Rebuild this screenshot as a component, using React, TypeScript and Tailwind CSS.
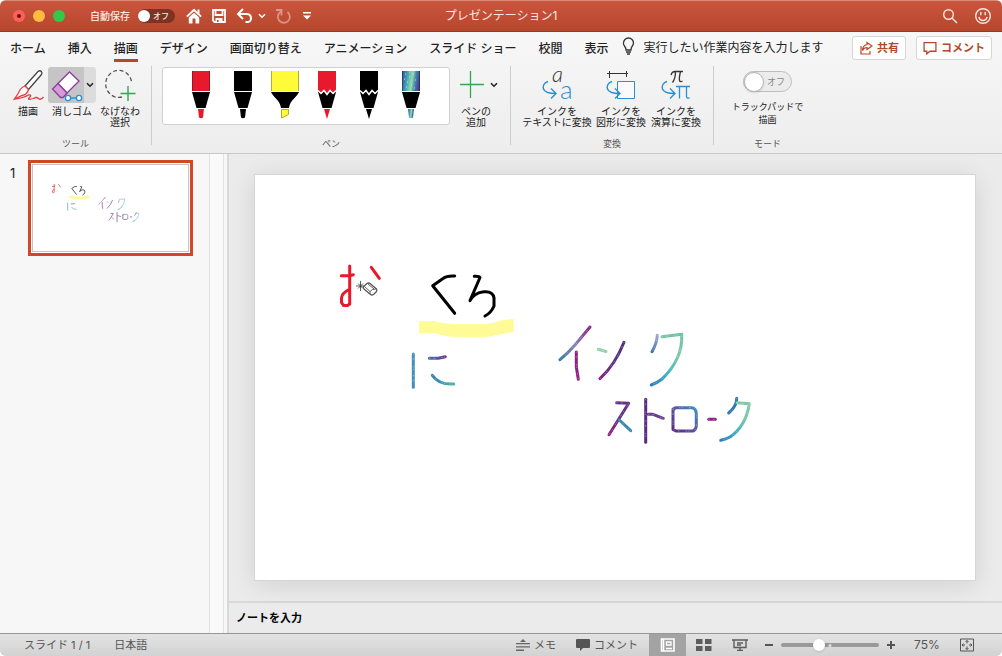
import { useState } from 'react';
import type { ReactNode } from 'react';

const tabs = ['ホーム', '挿入', '描画', 'デザイン', '画面切り替え', 'アニメーション', 'スライド ショー', '校閲', '表示'];

const galaxyStops = ['#3f4a8c', '#3b7fb5', '#4fb8b0', '#9fd6a8', '#3b86b4', '#4a4590'];

const pens = [
  { id: 'red-pen', label: '赤のペン', kind: 'pen', color: '#e8192c' },
  { id: 'black-pen', label: '黒のペン', kind: 'pen', color: '#000000' },
  { id: 'highlighter', label: '黄色の蛍光ペン', kind: 'marker', color: '#fffb38' },
  { id: 'red-pencil', label: '赤の鉛筆', kind: 'pencil', color: '#e8192c' },
  { id: 'black-pencil', label: '黒の鉛筆', kind: 'pencil', color: '#000000' },
  { id: 'galaxy-pen', label: '銀河のペン', kind: 'pen', color: 'url(#penGalaxy)' },
];

const Pen = ({ kind, color }: { kind: string; color: string }) => (
  <svg viewBox="0 0 28 48" className="h-12 w-7">
    <defs>
      <linearGradient id="penGalaxy" x1="0" y1="0" x2="1" y2="0.15">
        {galaxyStops.map((stop, i) => (
          <stop key={i} offset={i / 5} stopColor={stop} />
        ))}
      </linearGradient>
    </defs>
    {kind === 'marker' && (
      <>
        <path d="M0 0h28v20H0z" fill={color} />
        <path d="M.5 0v20M27.5 0v20" stroke="#b5b02c" />
        <path d="M0 21h28c-2 5-9 8-10 16h-8C9 29 2 26 0 21z" />
        <path d="M10.500 38.500h7v5l-7 3.500z" fill={color} stroke="#b5a92c" />
      </>
    )}
    {kind === 'pen' && (
      <>
        <path d="M5 0h18v20H5z" fill={color} />
        <path d="M5.500 0v20M22.500 0v20" stroke="#000" opacity=".3" />
        <path d="M5 21h18l-4.500 16h-9z" />
        <path d="M11 38h6l-1 8.500q-2 1.500-4 0z" fill={color} />
        {color.startsWith('url') && (
          <path d="M8 3h1M12 6h1M10 11h1M16 3h1M18 9h1M14 14h1M9 16h1M17 17h1M12 1h1M7 8h1" stroke="#d9f2ef" opacity=".8" />
        )}
      </>
    )}
    {kind === 'pencil' && (
      <>
        <path d="M5 21h18l-4.500 16h-9z" />
        <path d="M5 0h18v20l-2.500 2.500-3-3-3.500 4-3.500-4-3 3L5 20z" fill={color} />
        <path d="M5 19.500 8 22.500l3-3 3 4 3-4 3 3 3-3" fill="none" stroke="#fff" strokeWidth="1.500" />
        <path d="M11 38h6l-3 10z" fill={color} />
      </>
    )}
  </svg>
);

const InkStrokes = ({ prefix }: { prefix: string }) => {
  const paint = (name: string) => `url(#${prefix}-${name})`;
  const galaxy = [
    { d: 'M335 152L320 170Q313 178 305 184.700', stroke: paint('a') },
    { d: 'M321.300 177V191.700L323.300 204.300', stroke: '#8a2183' },
    { d: 'M343.300 174.300L351 176.500', stroke: '#93d0ae' },
    { d: 'M369 167.300Q360 190 345 203.700', stroke: paint('b') },
    { d: 'M402.300 160.300Q402 168 397 176.700', stroke: paint('c') },
    { d: 'M407 161.700L426.700 159.300Q428 184 406.700 204.300Q402 208 396.300 210', stroke: paint('d') },
    { d: 'M361.700 227.700L373.700 228.300L364.300 243.300L354 259.700', stroke: paint('e') },
    { d: 'M364.300 245L375.700 255.700', stroke: '#3a86ae' },
    { d: 'M390.700 224.300V267.300', stroke: '#5b2a80' },
    { d: 'M393.300 239.300H398L408.300 243.300', stroke: '#6c3b8c' },
    { d: 'M418 234V254.500L421 256H438Q441 255 441.300 251V239Q441 233 437 232.700H421Q418 233 418 237', stroke: paint('f') },
    { d: 'M453.700 244.300H460.300', stroke: '#8a2183' },
    { d: 'M481.700 223.300Q482 231 473.700 238', stroke: '#3478b0' },
    { d: 'M482.300 227.700L494.300 228.700Q491 251 475 262Q471 264 465.700 265.300', stroke: paint('g') },
    { d: 'M158.300 179V212.300', stroke: '#448fb8' },
    { d: 'M174.300 183.300H183.300L190.300 181.700', stroke: paint('h') },
    { d: 'M177.300 200.300Q184 210 198.700 209', stroke: paint('i') },
  ];
  const gradients = [
    { id: 'a', at: [335, 152, 305, 185], colors: ['#8a2080', '#8683bb', '#3479ad'] },
    { id: 'b', at: [369, 167, 345, 204], colors: ['#4b3078', '#5b3585', '#8a2080'] },
    { id: 'c', at: [402, 160, 397, 177], colors: ['#9ba6cf', '#7790c0', '#3e72a8'] },
    { id: 'd', at: [422, 159, 397, 210], colors: ['#6fc2a2', '#82c7a3', '#43b6c6', '#2f7fb6'] },
    { id: 'e', at: [374, 228, 354, 260], colors: ['#6a2f86', '#5f3386', '#94208a'] },
    { id: 'f', at: [418, 256, 442, 233], colors: ['#5b2a80', '#5a55a0', '#3b8fc0'] },
    { id: 'g', at: [492, 228, 466, 265], colors: ['#7fcaa6', '#79c4a5', '#3fb2c4', '#2f7fb6'] },
    { id: 'h', at: [174, 183, 190, 181], colors: ['#3a72b4', '#5a55a0', '#6b3590'] },
    { id: 'i', at: [177, 200, 199, 209], colors: ['#3a7fb0', '#3a98b4', '#4fb59f'] },
  ];

  return (
    <svg viewBox="0 0 720 405" className="h-full w-full" role="img" aria-label="インク ストローク">
      <defs>
        {gradients.map(({ id, at, colors }) => (
          <linearGradient key={id} id={`${prefix}-${id}`} gradientUnits="userSpaceOnUse" x1={at[0]} y1={at[1]} x2={at[2]} y2={at[3]}>
            {colors.map((color, i) => (
              <stop key={i} offset={i / (colors.length - 1)} stopColor={color} />
            ))}
          </linearGradient>
        ))}
      </defs>
      <path d="M164 146h14q12 3 22 3h30q9-1 18-4l10.700-1v13l-17.700 3q-6 2-12 2h-30q-10-1-21-4h-14z" fill="#fffb97" />
      <g fill="none" strokeWidth="3" strokeLinecap="round" strokeLinejoin="round">
        <g stroke="#e8192c">
          <path d="M94.700 91V129L92.500 130.500H88.500L86.500 127.500V123Q87 118 94 114.500" />
          <path d="M86.300 100.700H94L98.300 99.700M116.300 92.300L124.300 103.300" />
        </g>
        <g stroke="#000">
          <path d="M199.700 101Q192 100.500 188 103.500L177.700 110.700L199.700 138.300" />
          <path d="M219.300 101.300Q224 101 225 102.500L215 125.700Q219 117.500 229 116.700Q238 116 239 123V131Q236 138 230 141" />
        </g>
        {galaxy.map((ink) => (
          <path key={ink.d} d={ink.d} stroke={ink.stroke} />
        ))}
        <g stroke="#fff" strokeWidth="1" strokeDasharray="0.500 4 1 7 0.500 2 0.500 6" opacity=".35">
          {galaxy.map((ink) => (
            <path key={ink.d} d={ink.d} />
          ))}
        </g>
      </g>
    </svg>
  );
};

const Chevron = () => (
  <svg viewBox="0 0 8 6" className="h-[6px] w-2" fill="none" stroke="currentColor" strokeWidth="1.600">
    <path d="M1 1.200l3 3 3-3" />
  </svg>
);

const ConvertArrow = () => (
  <path d="M8 12.500C4 13.500 2.500 17 3.500 20Q5 24.500 16 24.500M11 19.500l5 5-5 5" fill="none" stroke="#2b8fd0" strokeWidth="1.400" />
);

const convertTools = [
  {
    lines: ['インクを', 'テキストに変換'],
    width: 'w-[72px]',
    icon: (
      <>
        <text x="12" y="13" className="fill-[#333] font-['Lato'] text-[22px] font-light italic">a</text>
        <text x="20" y="30" className="fill-[#2b8fd0] font-['Lato'] text-[26px] font-light">a</text>
        <ConvertArrow />
      </>
    ),
  },
  {
    lines: ['インクを', '図形に変換'],
    width: 'w-14',
    icon: (
      <>
        <path d="M3 4.500h21M5.500 2v7M22.500 2v6" stroke="#333" fill="none" />
        <path d="M13.500 12.500h17v17h-17z" fill="#fafafa" stroke="#2b8fd0" />
        <ConvertArrow />
      </>
    ),
  },
  {
    lines: ['インクを', '演算に変換'],
    width: 'w-[54px]',
    icon: (
      <>
        <path d="M12 6q1-3.500 4-3.500h8M16.500 2.500q0 7-3 11M21.500 2.500q-1.500 6-1 9 .5 2 3 .5" fill="none" stroke="#333" strokeWidth="1.300" />
        <path d="M17 17.500h14M20.500 17.500v12M27.500 17.500v10q0 2 3 1.500" fill="none" stroke="#2b8fd0" strokeWidth="1.300" />
        <ConvertArrow />
      </>
    ),
  },
];

const Group = ({ label, className, children }: { label: string; className: string; children: ReactNode }) => (
  <section aria-label={label} className={`flex h-[89px] flex-col justify-between pb-1 ${className}`}>
    <div className="flex">{children}</div>
    <p className="text-center text-[9px] leading-[11px] text-[#555]">{label}</p>
  </section>
);

const Divider = () => <div className="mt-[2px] h-[79px] w-px shrink-0 bg-[#cdcdcd]" />;

const TitleBar = () => {
  const [autoSave, setAutoSave] = useState(false);

  return (
    <header className="grid h-8 grid-cols-[1fr_auto_1fr] items-center border-t border-b border-t-[#d98a78] border-b-[#983820] bg-linear-to-b from-[#ca553d] to-[#b6472d] text-white">
      <div className="flex items-center pl-[13px]">
        <div className="flex gap-2">
          <button aria-label="閉じる" className="flex size-3 items-center justify-center rounded-full bg-[#fc605b]">
            <span className="size-1 rounded-full bg-[#6b0d08]" />
          </button>
          <button aria-label="しまう" className="size-3 rounded-full bg-[#fdbc40]" />
          <button aria-label="拡大" className="size-3 rounded-full bg-[#34c84a]" />
        </div>
        <label className="ml-[25px] flex items-center gap-2 text-[10px] font-medium text-[#fbe6e0]">
          自動保存
          <input type="checkbox" checked={autoSave} onChange={(e) => setAutoSave(e.target.checked)} className="sr-only" />
          <span className="flex h-[14px] w-[37px] items-center rounded-full bg-[#7c3322] text-[8px] leading-none">
            <span className="mr-[3px] size-3 rounded-full bg-white" />
            オフ
          </span>
        </label>
        <div className="ml-[11px] flex items-center gap-[9px]">
          <button aria-label="ホーム">
            <svg viewBox="0 0 16 16" className="size-4" fill="#fff">
              <path d="M8 .5L.2 8l1.300 1.300L8 3.200l6.500 6.100L15.800 8l-2.300-2.200V1.500h-2v2.400z" />
              <path d="M8 4.800L2.800 9.600V15.500h3.700v-5h3v5h3.700V9.600z" />
            </svg>
          </button>
          <button aria-label="保存">
            <svg viewBox="0 0 16 16" className="size-4" fill="none" stroke="#fff" strokeWidth="1.800">
              <path d="M2 2h12v12H3.500L2 12.500zM4.500 2v5h7V2" />
              <path d="M4.500 10h7v4.500h-7z" fill="#fff" stroke="none" />
              <path d="M6 12h1.500v2H6z" fill="#b94b32" stroke="none" />
            </svg>
          </button>
          <div className="flex items-center gap-1">
            <button aria-label="元に戻す">
              <svg viewBox="0 0 18 16" className="h-4 w-[18px]" fill="none" stroke="#fff" strokeWidth="2">
                <path d="M7 1L2 6l5 5M2.500 6H11q4 .3 4 4.200T11 14H9.500" />
              </svg>
            </button>
            <button aria-label="元に戻す履歴"><Chevron /></button>
          </div>
          <button aria-label="やり直し">
            <svg viewBox="0 0 16 16" className="size-4 opacity-40" fill="none" stroke="#fff" strokeWidth="1.800">
              <path d="M6 3.500A6 6 0 1 0 12.500 4M1 2h5.500v5.500" />
            </svg>
          </button>
          <button aria-label="カスタマイズ" className="ml-[3px]">
            <svg viewBox="0 0 8 8" className="size-2" fill="#fff"><path d="M0 0h8v1.500H0zM0 3.500h8l-4 4z" /></svg>
          </button>
        </div>
      </div>
      <h1 className="text-[12px] text-[#fbe6e0]">プレゼンテーション1</h1>
      <div className="flex items-center justify-end gap-4 pr-[10px]">
        <button aria-label="検索">
          <svg viewBox="0 0 16 16" className="size-4" fill="none" stroke="#fbe6e0" strokeWidth="1.400">
            <circle cx="6.500" cy="6.500" r="4.800" /><path d="M10 10l5 5" />
          </svg>
        </button>
        <button aria-label="フィードバック">
          <svg viewBox="0 0 18 18" className="size-[18px]" fill="none" stroke="#fbe6e0" strokeWidth="1.400">
            <circle cx="9" cy="9" r="7.300" /><path d="M6.800 5v3.200M11.200 5v3.200M4.800 10q1 3.500 4.200 3.500t4.200-3.500" />
          </svg>
        </button>
      </div>
    </header>
  );
};

const TabBar = () => {
  const [active, setActive] = useState('描画');

  return (
    <div className="flex h-8 items-center text-[12px] text-[#222]">
      <nav className="flex gap-[22px] pl-[10px]">
        {tabs.map((tab) => (
          <button key={tab} onClick={() => setActive(tab)} className={`mt-1 border-b-[3px] font-medium whitespace-nowrap leading-5 ${active === tab ? 'border-[#b7472a]' : 'border-transparent'}`}>
            {tab}
          </button>
        ))}
      </nav>
      <label className="ml-[14px] flex flex-1 items-center gap-2">
        <svg viewBox="0 0 13 18" className="mb-1 h-[18px] w-[13px]" fill="none" stroke="#333" strokeWidth="1.300">
          <path d="M4 13q0-2-1.500-4T1.500 6a5 5 0 0 1 10 0q0 1.500-1.200 3T9 13zM4 15h5M5 17h3" />
        </svg>
        <input type="text" aria-label="操作アシスト" placeholder="実行したい作業内容を入力します" className="min-w-0 flex-1 bg-transparent outline-none placeholder:text-[#222]" />
      </label>
      <div className="flex gap-[10px] pr-[10px] text-[11px] font-bold text-[#b7472a]">
        <button className="flex h-6 items-center gap-1 rounded-[3px] border border-[#d6d6d6] bg-white px-[6px]">
          <svg viewBox="0 0 14 14" className="size-[14px]" fill="none" stroke="currentColor" strokeWidth="1.200">
            <path d="M2 5v8h9v-3" /><path d="M8 1.500L13 5 8 8.500v-2q-3 0-4.500 3 0-5 4.500-6z" />
          </svg>
          共有
        </button>
        <button className="flex h-6 items-center gap-1 rounded-[3px] border border-[#d6d6d6] bg-white px-[6px]">
          <svg viewBox="0 0 13 13" className="size-[14px]" fill="none" stroke="currentColor" strokeWidth="1.200">
            <path d="M1 1.500h11v8H6.500L3.500 12V9.500H1z" />
          </svg>
          コメント
        </button>
      </div>
    </div>
  );
};

const Ribbon = () => {
  const [trackpad, setTrackpad] = useState(false);

  return (
    <div className="flex border-b border-[#c8c8c8] text-[10px] leading-[11px] text-[#222]">
      <Group label="ツール" className="w-[151px]">
        <div className="flex pt-[3px] pl-2">
          <button className="flex w-10 flex-col items-center">
            <svg viewBox="0 0 32 36" className="mb-[3px] h-9 w-8" fill="none" strokeWidth="1.300">
              <path d="M13 19L26 4.500q2-1.500 3.300 0t0 3.300L16.500 22.500z" stroke="#444" fill="#fff" />
              <path d="M13 19q-5 2-6.500 7L2.500 32 10 28.500q5-.5 6.500-6z" stroke="#ee3a43" fill="#fff" />
              <path d="M2.500 32q9-1 14-4 4-.5 1 2.500t4 1q3-2 5 0t5-1.500" stroke="#ee3a43" />
            </svg>
            描画
          </button>
          <div className="flex w-12 flex-col items-center">
            <div className="mb-[3px] flex h-9 w-12 overflow-hidden rounded-[3px]">
              <button aria-label="消しゴム" aria-pressed="true" className="flex-1 bg-[#c5c5c5]">
                <svg viewBox="0 0 36 36" className="h-9 w-9" fill="none" strokeWidth="1.300">
                  <path d="M10 16.500L21.500 5 31 14 19 26z" fill="#fff" stroke="#8c3d9c" />
                  <path d="M10 16.500L4.500 22l8 8.500H15l4-4.500z" fill="#d79ad8" stroke="#8c3d9c" />
                  <path d="M22 31h7" stroke="#2b8fd0" />
                  <circle cx="20" cy="31" r="2.600" fill="#fff" stroke="#2b8fd0" />
                  <circle cx="31" cy="31" r="2.600" fill="#fff" stroke="#2b8fd0" />
                </svg>
              </button>
              <button aria-label="消しゴムの種類" className="flex w-3 items-center justify-center bg-[#dcdcdc]"><Chevron /></button>
            </div>
            消しゴム
          </div>
          <button className="flex w-12 flex-col items-center">
            <svg viewBox="0 0 32 36" className="mb-[3px] h-9 w-8" fill="none">
              <path d="M18 30A13 13.500 0 1 1 27.500 14.500" stroke="#555" strokeWidth="1.300" strokeDasharray="4 2.500" />
              <path d="M24 19v15M16.500 26.500h15" stroke="#2fa84f" strokeWidth="1.400" />
            </svg>
            なげなわ<br />選択
          </button>
        </div>
      </Group>
      <Divider />
      <Group label="ペン" className="w-[358px]">
        <div className="mt-[3px] ml-[10px] flex h-[58px] gap-[14px] rounded-[3px] border border-[#d0d0d0] bg-white px-6 pt-[3px]">
          {pens.map((pen) => (
            <button key={pen.id} aria-label={pen.label} className="h-12 w-7"><Pen kind={pen.kind} color={pen.color} /></button>
          ))}
        </div>
        <div className="flex items-start pt-[3px] pl-1">
          <button className="flex w-11 flex-col items-center">
            <svg viewBox="0 0 32 36" className="mb-[3px] h-9 w-8" stroke="#2fa84f" strokeWidth="1.300"><path d="M10.500 4v27M0 17.500h24" /></svg>
            ペンの<br />追加
          </button>
          <button aria-label="ペンの種類" className="-ml-2 flex h-9 w-2 items-center"><Chevron /></button>
        </div>
      </Group>
      <Divider />
      <Group label="変換" className="w-[202px]">
        <div className="flex pt-[3px] pl-[10px]">
          {convertTools.map((tool) => (
            <button key={tool.lines[1]} className={`flex flex-col items-center whitespace-nowrap ${tool.width}`}>
              <svg viewBox="0 0 34 36" className="mb-[3px] h-9 w-[34px] overflow-visible"><g transform="translate(0 2)">{tool.icon}</g></svg>
              {tool.lines[0]}<br />{tool.lines[1]}
            </button>
          ))}
        </div>
      </Group>
      <Divider />
      <Group label="モード" className="w-[107px]">
        <label className="flex flex-1 flex-col items-center gap-2 pt-[7px] text-center text-[9px] leading-[13px]">
          <input type="checkbox" checked={trackpad} onChange={(e) => setTrackpad(e.target.checked)} className="sr-only" />
          <span className="flex h-[21px] w-[49px] items-center gap-[3px] rounded-full border border-[#bdbdbd] bg-[#ececec] text-[#888]">
            <span className="size-5 rounded-full border border-[#b5b5b5] bg-white shadow-sm" />
            オフ
          </span>
          <span className="whitespace-nowrap">トラックパッドで<br />描画</span>
        </label>
      </Group>
    </div>
  );
};

const StatusBar = () => {
  const [zoom, setZoom] = useState(75);

  return (
    <footer className="flex h-[23px] items-center border-t border-[#979797] bg-linear-to-b from-[#e3e3e3] to-[#d2d2d2] text-[11px] text-[#555]">
      <span className="pl-6">スライド 1 / 1</span>
      <button className="ml-6">日本語</button>
      <div className="ml-auto flex h-full items-center pr-[19px]">
        <button className="mr-5 flex items-center gap-1">
          <svg viewBox="0 0 14 12" className="h-3 w-[14px]" fill="#666"><path d="M7 0l3 3H4zM0 4h14v1.300H0zM0 7.300h14v1.300H0zM0 10.600h8v1.300H0z" /></svg>
          メモ
        </button>
        <button className="mr-[11px] flex items-center gap-1">
          <svg viewBox="0 0 14 12" className="h-3 w-[14px]" fill="#555"><path d="M1 0h12q1 0 1 1v7q0 1-1 1H7l-3 3V9H1Q0 9 0 8V1q0-1 1-1z" /></svg>
          コメント
        </button>
        <button aria-label="標準" aria-pressed="true" className="flex h-full w-[37px] items-center justify-center bg-[#a3a3a3]">
          <svg viewBox="0 0 15 14" className="h-[14px] w-[15px]" fill="none" stroke="#fff" strokeWidth="1.600">
            <path d="M1.500 1h12.500v12H1.500zM3.500 1v12M6 10.500h6" /><path d="M6.500 4h4.500v3H6.500z" strokeWidth="1.300" />
          </svg>
        </button>
        <button aria-label="スライド一覧" className="flex h-full w-9 items-center justify-center">
          <svg viewBox="0 0 16 12" className="h-3 w-4" fill="#5c5c5c"><path d="M0 0h6.500v5H0zM9 0h6.500v5H9zM0 7h6.500v5H0zM9 7h6.500v5H9z" /></svg>
        </button>
        <button aria-label="スライド ショー" className="flex h-full w-9 items-center justify-center">
          <svg viewBox="0 0 16 12" className="h-3 w-4" fill="none" stroke="#5c5c5c" strokeWidth="1.400"><path d="M0 1h16M2 1v7.500h12V1M5 4h6M5 6h4M8 8.500v3M5 11.500h6" /></svg>
        </button>
        <button aria-label="縮小" onClick={() => setZoom(Math.max(10, zoom - 5))} className="mr-px flex w-[22px] justify-center">
          <svg viewBox="0 0 8 8" className="size-2" stroke="#555" strokeWidth="2"><path d="M0 4h8" /></svg>
        </button>
        <div className="relative flex w-[98px] items-center">
          <input
            type="range"
            aria-label="ズーム"
            min="0"
            max="200"
            value={zoom}
            onChange={(e) => setZoom(Number(e.target.value))}
            className="h-1 w-full appearance-none rounded-full bg-[#999] [&::-webkit-slider-thumb]:size-3 [&::-webkit-slider-thumb]:appearance-none [&::-webkit-slider-thumb]:rounded-full [&::-webkit-slider-thumb]:bg-white [&::-webkit-slider-thumb]:shadow"
          />
          <span className="pointer-events-none absolute left-1/2 size-[3px] -translate-x-1/2 rounded-full bg-[#e0e0e0]" />
        </div>
        <button aria-label="拡大" onClick={() => setZoom(Math.min(200, zoom + 5))} className="flex w-6 justify-center">
          <svg viewBox="0 0 8 8" className="size-2" stroke="#555" strokeWidth="2"><path d="M0 4h8M4 0v8" /></svg>
        </button>
        <output className="w-12 text-center text-[12px]">{zoom}%</output>
        <button aria-label="ウィンドウに合わせる" className="flex w-8 justify-center">
          <svg viewBox="0 0 14 14" className="size-[14px]" fill="none" stroke="#555"><path d="M.5 1h13v12H.5zM7 2.500v3M5.500 4L7 2.500 8.500 4M7 11.500v-3M5.500 10L7 11.500 8.500 10M2 7h3M3.500 5.500L2 7l1.500 1.500M12 7H9M10.500 5.500L12 7l-1.500 1.500" /></svg>
        </button>
      </div>
    </footer>
  );
};

const App = () => (
  <div className="bg-white font-['Inter','Noto_Sans_CJK_JP',sans-serif]">
    <div className="flex min-h-screen flex-col overflow-hidden rounded-md bg-[#ebebeb]">
      <TitleBar />
      <div className="bg-linear-to-b from-[#f7f7f7] to-[#ededed]">
        <TabBar />
        <Ribbon />
      </div>
      <div className="flex flex-1">
        <aside className="flex w-[209px] shrink-0 items-start bg-[#f7f7f7] pt-[6px] pl-[10px]">
          <span className="w-[18px] pt-[5px] text-[13px] leading-4 text-[#222]">1</span>
          <button aria-label="スライド 1" className="w-[165px] border-[3px] border-[#d24726] bg-white p-px">
            <div className="aspect-[157/88] border border-[#c4c4c4]">
              <InkStrokes prefix="thumb" />
            </div>
          </button>
        </aside>
        <div className="w-[15px] shrink-0 border-x border-[#e2e2e2] bg-[#fafafa]" />
        <div className="w-[5px] shrink-0 border-r-2 border-[#d8d8d8] bg-[#f7f7f7]" />
        <main className="flex min-w-0 flex-1 flex-col">
          <div className="flex flex-1 items-center pr-[27px] pl-[26px]">
            <div className="relative aspect-video w-full bg-white shadow-[0_0_0_1px_#d6d6d6,0_4px_24px_rgba(0,0,0,0.12)]">
              <InkStrokes prefix="slide" />
              {/* eraser cursor */}
              <svg viewBox="0 0 24 24" className="absolute top-[25%] left-[14%] size-6" fill="none" stroke="#555">
                <path d="M4.500 5v10M0 10h9M2 7.500l5 5M7 7.500l-5 5" stroke="#333" strokeWidth=".8" />
                <path d="M7.500 10.500L11 7.500q1.500-1 3 0l6.500 5.500q.8 1.200 0 2.500L17.500 18.500q-1.500 1-3 0L8 13q-1-1.200-.5-2.500z" fill="#fff" strokeWidth="1.300" />
                <path d="M14 18v-2.500q1.500-2.500 6-2.500M8.500 10.500l5.500 5M12 8l6 5" strokeWidth=".9" />
              </svg>
            </div>
          </div>
          <input type="text" aria-label="ノート" placeholder="ノートを入力" className="h-8 w-full border-t-2 border-[#d8d8d8] bg-transparent px-[7px] text-[11px] font-bold outline-none placeholder:text-black" />
        </main>
      </div>
      <StatusBar />
    </div>
  </div>
);

export default App;
